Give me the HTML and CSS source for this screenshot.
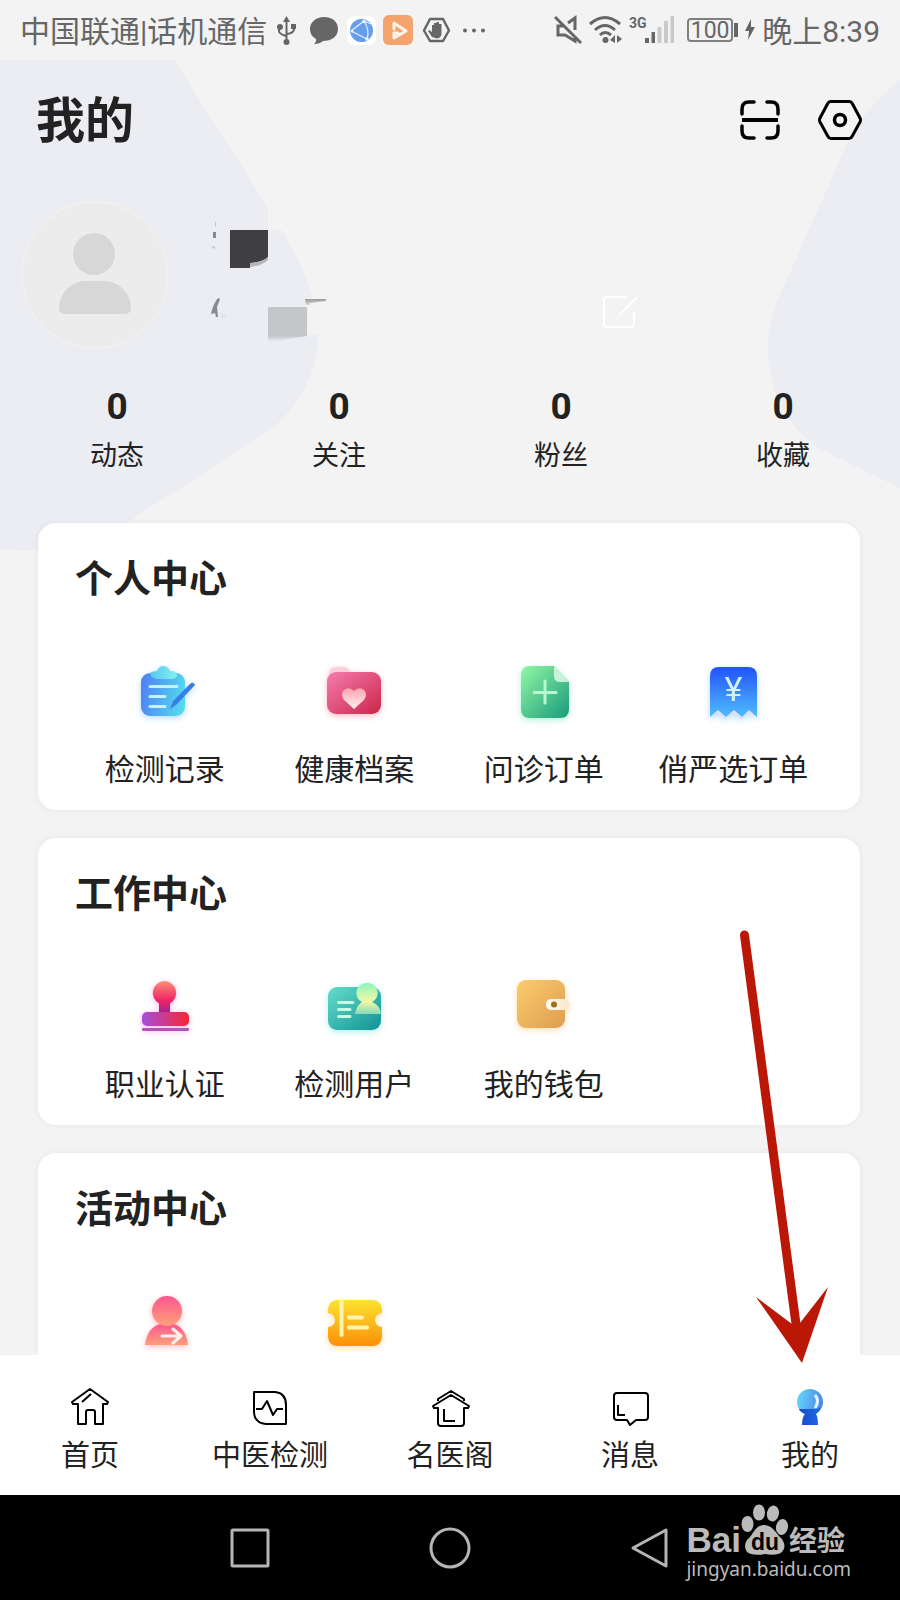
FILE: index.html
```html
<!DOCTYPE html>
<html lang="zh-CN">
<head>
<meta charset="UTF-8" />
<meta name="viewport" content="width=device-width, initial-scale=1" />
<title>我的</title>
<link rel="stylesheet" href="styles.css">
</head>
<body>

<svg class="blob blob-left" viewBox="0 60 330 500"><path d="M0 60H174L262 198C288 240 318 285 318 335C318 385 285 423 255 440L126 523Q70 556 0 549Z"/></svg>
<svg class="blob blob-right" viewBox="760 60 140 440"><path d="M900 80Q860 110 842 155L788 277C776 303 768 320 768 347C768 400 795 436 828 453L900 488Z"/></svg>

<div class="status-bar">
  <span class="carrier">中国联通|话机通信</span>
  <svg class="status-left" width="212" height="32" viewBox="276 14 212 32">
    <g fill="none" stroke="#666" stroke-width="2">
      <path d="M286.500 20V40M279 28V31Q279 34 286 36M294 27V29Q294 33 287 34"/>
    </g>
    <g fill="#666">
      <path d="M286.500 16L290 22H283Z"/>
      <circle cx="286.500" cy="42" r="3"/>
      <circle cx="280" cy="27" r="3"/>
      <path d="M291 24H296V29H291Z"/>
      <path d="M324 17C333 17 338 22 338 29C338 37 331 41 323 41Q320 44 314 44Q317 41 316 39Q310 36 310 29C310 22 316 17 324 17Z"/>
    </g>
    <rect x="347" y="16" width="29" height="29" rx="7" fill="#fff"/>
    <circle cx="361.500" cy="30.500" r="11.500" fill="#659eed"/>
    <path d="M351 31L364 21M351 31L367 39M364 21Q370 30 367 39M364 21L371 24" fill="none" stroke="#e8f2ff" stroke-width="1.200"/>
    <g fill="#e8f2ff"><circle cx="364" cy="21.500" r="1.800"/><circle cx="367" cy="39" r="1.800"/><circle cx="352" cy="31" r="1.500"/></g>
    <rect x="383" y="15" width="30" height="30" rx="6" fill="#f4a36c"/>
    <path d="M394 29V23L406 31L394 38V33H398" fill="none" stroke="#fff3e8" stroke-width="3" stroke-linejoin="round" stroke-linecap="round"/>
    <path d="M430 19H443L449 30.500L443 41H430L424 30.500Z" fill="none" stroke="#666" stroke-width="2.500" stroke-linejoin="round"/>
    <path d="M432 37L428 31Q429 29 432 32V25H434V30V23H436.500V29V22H439V29V24H441.500V34Q441 38 437 38.500Z" fill="#666"/>
    <g fill="#666"><circle cx="465" cy="30.500" r="2"/><circle cx="474" cy="30.500" r="2"/><circle cx="483" cy="30.500" r="2"/></g>
  </svg>
  <div class="status-right">
    <svg width="122" height="32" viewBox="554 14 122 32">
      <g fill="none" stroke="#666" stroke-width="3">
        <path d="M555 17L581 43M565 26H558V35H565L575 41V36M568 23L575 18V30"/>
        <path d="M590 24Q605 11 620 24M595 30Q605 21 615 30M600 35Q605 30 611 35"/>
      </g>
      <circle cx="605.500" cy="40" r="3" fill="#666"/>
      <path d="M610 40L615 35V43ZM617 35V43L622 39Z" fill="#666"/>
      <text x="629" y="28" class="net">3G</text>
      <path d="M645 38H649V43H645ZM651.500 32H655V43H651.500Z" fill="#666"/>
      <path d="M657.500 27H661.500V43H657.500ZM664 21H668V43H664ZM670.500 16H674V43H670.500Z" fill="#c9c9c9"/>
    </svg>
    <span class="battery">100</span>
    <svg class="bolt" width="12" height="24" viewBox="0 0 12 24"><path d="M7 1L1 13H5L4 22L11 9H7Z" fill="#666"/></svg>
    <span class="clock">晚上8:39</span>
  </div>
</div>

<header class="header">
  <h1>我的</h1>
  <div class="header-actions">
    <button aria-label="扫一扫">
      <svg width="44" height="44" viewBox="738 98 44 44" fill="none" stroke="#000" stroke-width="3.500" stroke-linecap="round">
        <path d="M742 114V109Q742 102 749 102H754M767 102H771Q778 102 778 109V114M778 126V131Q778 138 771 138H767M754 138H749Q742 138 742 131V126"/>
        <path d="M742 120H778" stroke-width="4" stroke-linecap="butt"/>
      </svg>
    </button>
    <button aria-label="设置">
      <svg width="44" height="44" viewBox="818 98 44 44" fill="none" stroke="#000" stroke-width="3" stroke-linejoin="round">
        <path d="M831 101.500H849Q851 101.500 852 103L860 118Q861 120 860 122L852 136.500Q851 138.500 849 138.500H831Q829 138.500 828 136.500L820 122Q819 120 820 118L828 103Q829 101.500 831 101.500Z"/>
        <circle cx="840" cy="120" r="5.500" stroke-width="3.500"/>
      </svg>
    </button>
  </div>
</header>

<section class="profile">
  <svg class="avatar" viewBox="0 0 148 148">
    <circle cx="74" cy="74" r="73" fill="#ececec" stroke="#f0f0f0" stroke-width="2"/>
    <circle cx="73" cy="53" r="21" fill="#d7d7d7"/>
    <path d="M64 80H84C100 81 110 94 110 107Q110 113 103 113H45Q38 113 38 107C38 94 48 81 64 80Z" fill="#d7d7d7"/>
  </svg>
  <!-- hidden name and id -->
  <svg class="masked" viewBox="0 0 400 148">
    <defs>
      <linearGradient id="fade" x1="0" y1="0" x2="0" y2="1"><stop offset=".82" stop-color="#c5c6ca"/><stop offset="1" stop-color="#c5c6ca" stop-opacity="0"/></linearGradient>
      <linearGradient id="fadeLine" x1="0" y1="0" x2="0" y2="1"><stop stop-color="#999"/><stop offset="1" stop-color="#ddd"/></linearGradient>
    </defs>
    <path d="M68 0H92V29H68ZM107 97H121V134H107Z" fill="#f3f3f3"/>
    <path d="M30 29H68V56Q63 61 50 62V67H30Z" fill="#3f3f42"/>
    <path d="M50 62Q63 61 68 56V59Q62 65 50 66Z" fill="#b5b5b9"/>
    <path d="M13 31H16V37H13Z" fill="#88898c"/>
    <path d="M15 21H16V26H15ZM11 46L15 45V48Z" fill="#c5c6ca"/>
    <path d="M18 97L20 98L17 106L18 116H16L15 112L11 113Q13 103 18 97Z" fill="#88898c"/>
    <path d="M21 112L27 114V117H21Z" fill="#e3e4e9"/>
    <path d="M68 106H107V135L68 141Z" fill="url(#fade)"/>
    <path d="M105 98H126V100L110 102V104H106Z" fill="url(#fadeLine)"/>
  </svg>
  <button class="edit" aria-label="编辑">
    <svg width="40" height="40" viewBox="600 292 40 40" fill="none" stroke="#fff" stroke-width="2"><path d="M627 297H608Q604 297 604 301V323Q604 327 608 327H630Q634 327 634 323V312M619 315L637 297"/></svg>
  </button>
</section>

<section class="stats">
  <div><strong>0</strong><span>动态</span></div>
  <div><strong>0</strong><span>关注</span></div>
  <div><strong>0</strong><span>粉丝</span></div>
  <div><strong>0</strong><span>收藏</span></div>
</section>

<main class="cards">
  <section class="card">
    <h2>个人中心</h2>
    <div class="menu">
      <a href="#">
        <svg class="glow-blue" viewBox="0 0 60 60">
          <defs>
            <linearGradient id="g1" x1="0" y1=".4" x2="1" y2=".6"><stop stop-color="#4d83f3"/><stop offset="1" stop-color="#55dbee"/></linearGradient>
            <linearGradient id="g2"><stop stop-color="#5ac6ee"/><stop offset="1" stop-color="#82f0ee"/></linearGradient>
          </defs>
          <rect x="6" y="10" width="44" height="43" rx="9" fill="url(#g1)"/>
          <path d="M15 10Q17 8 22 8Q24 3 28 3Q33 3 35 8H38Q42 9 42 13Q41 16 36 16H22Q15 15 15 10Z" fill="url(#g2)"/>
          <path d="M15 23.500H42M15 33.500H30M15 43.500H30" stroke="#c3f2fb" stroke-width="3" stroke-linecap="round"/>
          <path d="M56 20Q59 19 60 22L42 41L35 46L38 38Z" fill="#387ee8"/>
        </svg>
        <span>检测记录</span>
      </a>
      <a href="#">
        <svg class="glow-red" viewBox="0 0 60 60">
          <defs>
            <linearGradient id="g3" x1="0" y1="0" x2="1" y2="1"><stop stop-color="#f57caf"/><stop offset="1" stop-color="#cc2549"/></linearGradient>
            <linearGradient id="g4" x1="0" y1="0" x2="0" y2="1"><stop stop-color="#fba5b0"/><stop offset="1" stop-color="#fff0f0"/></linearGradient>
          </defs>
          <path d="M5 12Q5 4 12 4H20Q25 4 26 11Z" fill="#fbd0d9"/>
          <rect x="3" y="9" width="54" height="42" rx="9" fill="url(#g3)"/>
          <path d="M30 46L20 37Q16 31 20 27Q25 23 30 28Q35 23 40 27Q44 31 40 37Z" fill="url(#g4)"/>
        </svg>
        <span>健康档案</span>
      </a>
      <a href="#">
        <svg class="glow-green" viewBox="0 0 60 60">
          <defs><linearGradient id="g5" x1="0" y1="0" x2="1" y2="1"><stop stop-color="#92f7a4"/><stop offset="1" stop-color="#199b7c"/></linearGradient></defs>
          <path d="M16 3H40L55 19V46Q55 55 46 55H16Q7 55 7 46V12Q7 3 16 3Z" fill="url(#g5)"/>
          <path d="M40 3L55 19H46Q40 19 40 13Z" fill="#c9f3d9"/>
          <path d="M20 29.500H42M31 18V40" stroke="#b9f7d1" stroke-width="3" stroke-linecap="round"/>
        </svg>
        <span>问诊订单</span>
      </a>
      <a href="#">
        <svg class="glow-blue" viewBox="0 0 60 60">
          <defs><linearGradient id="g6" x1="0" y1="0" x2="0" y2="1"><stop stop-color="#2253fb"/><stop offset="1" stop-color="#4fbcfc"/></linearGradient></defs>
          <path d="M8 48H54V54L46 50L38 55L30 50L22 55L15 50L8 54Z" fill="#dfe4fb"/>
          <path d="M16 4H45Q54 4 54 13V54L46 47L39 54L31 47L23 54L15 47L7 54V13Q7 4 16 4Z" fill="url(#g6)"/>
          <text x="30.500" y="38" class="yen">¥</text>
        </svg>
        <span>俏严选订单</span>
      </a>
    </div>
  </section>

  <section class="card">
    <h2>工作中心</h2>
    <div class="menu">
      <a href="#">
        <svg class="glow-pink" viewBox="0 0 60 60">
          <defs>
            <linearGradient id="g7" x1="0" y1="0" x2="0" y2="1"><stop stop-color="#fb9070"/><stop offset=".6" stop-color="#ef2468"/><stop offset="1" stop-color="#a1208c"/></linearGradient>
            <linearGradient id="g8"><stop stop-color="#a54fdd"/><stop offset="1" stop-color="#f72631"/></linearGradient>
          </defs>
          <path d="M29.500 3A12 12 0 0 1 35 25.500V35H24V25.500A12 12 0 0 1 29.500 3Z" fill="url(#g7)"/>
          <rect x="7" y="34" width="47" height="14" rx="5" fill="url(#g8)"/>
          <rect x="7" y="50" width="47" height="3" rx="1" fill="#b155bd"/>
        </svg>
        <span>职业认证</span>
      </a>
      <a href="#">
        <svg class="glow-teal" viewBox="0 0 60 60">
          <defs>
            <linearGradient id="g9" x1="0" y1="0" x2="1" y2="1"><stop stop-color="#65ddca"/><stop offset="1" stop-color="#109295"/></linearGradient>
            <linearGradient id="g10" x1="0" y1="0" x2="0" y2="1"><stop stop-color="#8bf6bc"/><stop offset=".6" stop-color="#f2f8a5"/><stop offset="1" stop-color="#86d9bc"/></linearGradient>
          </defs>
          <rect x="4" y="9" width="53" height="43" rx="9" fill="url(#g9)"/>
          <path d="M14.500 24.500H29M14.500 31.500H26M14.500 38.500H26" stroke="#c8fbe2" stroke-width="3" stroke-linecap="round"/>
          <path d="M43 5A10 10 0 0 1 48 24Q56 27 57 36H31Q32 28 38 24A10 10 0 0 1 43 5Z" fill="url(#g10)"/>
        </svg>
        <span>检测用户</span>
      </a>
      <a href="#">
        <svg class="glow-gold" viewBox="0 0 60 60">
          <defs>
            <linearGradient id="g11" x1="0" y1="0" x2="1" y2="1"><stop stop-color="#fccc6b"/><stop offset="1" stop-color="#dd9d52"/></linearGradient>
            <linearGradient id="g12"><stop stop-color="#fff9ef"/><stop offset="1" stop-color="#fbe7cc"/></linearGradient>
          </defs>
          <rect x="3" y="2" width="48" height="48" rx="9" fill="url(#g11)"/>
          <rect x="32" y="21" width="23" height="11" rx="5" fill="url(#g12)"/>
          <circle cx="40" cy="26.500" r="3" fill="#9b7419"/>
        </svg>
        <span>我的钱包</span>
      </a>
    </div>
  </section>

  <section class="card card-last">
    <h2>活动中心</h2>
    <div class="menu">
      <a href="#" aria-label="邀请">
        <svg class="glow-red" viewBox="0 0 60 60">
          <defs><linearGradient id="g13" x1="0" y1="0" x2="0" y2="1"><stop stop-color="#fb5790"/><stop offset="1" stop-color="#fda078"/></linearGradient></defs>
          <path d="M10 52Q12 35 25 31H39Q51 35 53 52Z" fill="url(#g13)"/>
          <circle cx="32" cy="18" r="15" fill="url(#g13)"/>
          <path d="M27 43H45M38 36L46 43L38 50" fill="none" stroke="#fff0ea" stroke-width="3" stroke-linecap="round" stroke-linejoin="round"/>
        </svg>
      </a>
      <a href="#" aria-label="卡券">
        <svg class="glow-gold" viewBox="0 0 60 60">
          <defs><linearGradient id="g14" x1="0" y1="0" x2="0" y2="1"><stop stop-color="#fde331"/><stop offset="1" stop-color="#fd8f07"/></linearGradient></defs>
          <path d="M14 7H48Q57 7 58 16V20A7 7 0 0 0 58 34V44Q57 53 48 53H14Q5 53 4 44V34A7 7 0 0 0 4 20V16Q5 7 14 7Z" fill="url(#g14)"/>
          <path d="M17.500 8V42M25 24.500H38M25 34.500H43" stroke="#fff3b0" stroke-width="4" stroke-linecap="round"/>
        </svg>
      </a>
    </div>
  </section>
</main>

<nav class="tabs">
  <a href="#">
    <svg viewBox="0 0 40 40"><path d="M20 2L38 15L37 17H33V37H25V25Q25 23 23 23H18Q16 23 16 25V37H8V17H3L2 15ZM12 15L21 7"/></svg>
    <span>首页</span>
  </a>
  <a href="#">
    <svg viewBox="0 0 40 40"><path d="M4 5H25Q36 6 36 18V37H16Q4 36 4 24ZM6 22H12L17 14L23 28L27 22H33"/></svg>
    <span>中医检测</span>
  </a>
  <a href="#">
    <svg viewBox="0 0 40 40"><path d="M21 8L39 19L38 21H34V36Q34 39 31 39H11Q8 39 8 36V21H4L3 19ZM8 14V12L21 4L34 12V14M14 22V34H25"/></svg>
    <span>名医阁</span>
  </a>
  <a href="#">
    <svg viewBox="0 0 40 40"><path d="M7 6H35Q38 6 38 9V30Q38 33 35 33H26L20 38L17 33H7Q4 33 4 30V9Q4 6 7 6ZM8 18V28H15"/></svg>
    <span>消息</span>
  </a>
  <a href="#" class="active">
    <svg viewBox="0 0 40 40">
      <defs>
        <linearGradient id="g15" x1="0" y1=".4" x2="1" y2=".6"><stop stop-color="#64d4fc"/><stop offset="1" stop-color="#4a86e0"/></linearGradient>
        <linearGradient id="g16"><stop stop-color="#1d49c8"/><stop offset="1" stop-color="#1c6be8"/></linearGradient>
      </defs>
      <circle cx="20" cy="15" r="13" fill="url(#g15)"/>
      <path d="M9 22H22Q28 22 31 20Q30 24 26 27Q28 30 28 38H12Q12 30 15 27Q10 25 9 22Z" fill="url(#g16)"/>
      <path d="M25 8Q30 14 25 21" fill="none" stroke="#dff5ff" stroke-width="3"/>
    </svg>
    <span>我的</span>
  </a>
</nav>

<div class="system-nav">
  <button aria-label="最近"><svg viewBox="0 0 44 44"><rect x="4" y="4" width="36" height="36" rx="1"/></svg></button>
  <button aria-label="主屏幕"><svg viewBox="0 0 44 44"><circle cx="22" cy="22" r="19"/></svg></button>
  <button aria-label="返回"><svg viewBox="0 0 44 44"><path d="M38 4V40L5 22Z"/></svg></button>
  <div class="watermark">
    <div class="brand">
      <span class="bai">Bai</span>
      <svg width="48" height="54" viewBox="745 1503 48 54" fill="#bbb">
        <ellipse cx="751.500" cy="1524" rx="6" ry="8"/>
        <ellipse cx="763" cy="1512.500" rx="6" ry="8"/>
        <ellipse cx="777" cy="1513.500" rx="6" ry="8" transform="rotate(12 777 1513)"/>
        <ellipse cx="786" cy="1527" rx="6" ry="8" transform="rotate(10 786 1527)"/>
        <path d="M768 1525C777 1525 780 1534 786 1539Q791 1547 786 1552Q781 1556 769 1554Q756 1556 751 1552Q747 1546 751 1540C758 1534 759 1525 768 1525Z"/>
        <text x="769" y="1550" class="du">du</text>
      </svg>
      <span class="jy">经验</span>
    </div>
    <div class="url">jingyan.baidu.com</div>
  </div>
</div>

<!-- pointer to the last tab -->
<svg class="arrow" viewBox="738 928 94 438">
  <path d="M744.500 935L796.500 1328" stroke="#ba1706" stroke-width="9" stroke-linecap="round"/>
  <path d="M802 1363L756 1297L792 1324L800 1323L828 1287Z" fill="#ba1706"/>
</svg>

</body>
</html>
```
FILE: styles.css
```css
* {
  box-sizing: border-box;
}

body {
  position: relative;
  display: flex;
  flex-direction: column;
  height: 100vh;
  margin: 0;
  overflow: hidden;
  background: #f3f3f3;
  color: #222;
  font-family: Roboto, "Noto Sans CJK SC", sans-serif;
}

h1, h2 {
  margin: 0;
}

a {
  color: inherit;
  text-decoration: none;
}

button {
  padding: 0;
  border: none;
  background: none;
  cursor: pointer;
}

svg {
  display: block;
  flex-shrink: 0;
}

.blob {
  position: absolute;
  top: 60px;
  z-index: -1;
  fill: #ecedf3;
}

.blob-left {
  left: 0;
  width: 330px;
}

.blob-right {
  right: 0;
  width: 140px;
}

/* status bar */
.status-bar {
  display: flex;
  align-items: center;
  flex-shrink: 0;
  height: 60px;
  padding: 0 20px;
  color: #666;
  font-size: 30px;
  line-height: 56px;
  white-space: nowrap;
}

.carrier,
.clock {
  padding-top: 4px;
}

.status-left {
  margin-left: 9px;
}

.status-right {
  display: flex;
  align-items: center;
  margin-left: auto;
}

.net {
  font: bold 14px Roboto, sans-serif;
  fill: #666;
}

.battery {
  position: relative;
  width: 46px;
  height: 24px;
  margin: 0 11px;
  border: 2px solid #808080;
  border-radius: 4px;
  font-size: 23px;
  line-height: 21px;
  text-align: center;
}

.battery::after {
  content: '';
  position: absolute;
  top: 3px;
  right: -7px;
  width: 4px;
  height: 14px;
  background: #666;
}

.bolt {
  margin-right: 6px;
}

/* header */
.header {
  display: flex;
  align-items: center;
  justify-content: space-between;
  flex-shrink: 0;
  height: 120px;
  padding: 0 38px 0 36px;
}

.header h1 {
  padding-top: 4px;
  font-size: 49px;
  line-height: 72px;
}

.header-actions {
  display: flex;
  gap: 36px;
}

.profile {
  display: flex;
  flex-shrink: 0;
  margin-top: 21px;
  padding-left: 21px;
}

.avatar {
  width: 148px;
  margin-right: 31px;
}

.masked {
  width: 400px;
}

.edit {
  align-self: flex-end;
  margin-bottom: 17px;
}

.stats {
  display: grid;
  grid-template-columns: repeat(4, 1fr);
  margin: 36px 6px 49px;
  text-align: center;
}

.stats div {
  display: flex;
  flex-direction: column;
  gap: 9px;
}

.stats strong {
  font-size: 37px;
  line-height: 44px;
}

.stats span {
  font-size: 27px;
  line-height: 36px;
}

/* cards */
.cards {
  display: flex;
  flex: 1;
  flex-direction: column;
  gap: 28px;
  min-height: 0;
  padding: 0 40px 0 38px;
}

.card {
  flex-shrink: 0;
  padding: 28px 32px 20px;
  border-radius: 18px;
  background: #fff;
  box-shadow: 0 0 6px rgba(0, 0, 0, 0.06);
}

.card-last {
  flex: 1 1 0;
  padding-bottom: 0;
  border-radius: 18px 18px 0 0;
}

.card h2 {
  padding-left: 5px;
  font-size: 38px;
  line-height: 56px;
}

.menu {
  display: grid;
  grid-template-columns: repeat(4, 1fr);
  margin-top: 56px;
}

.menu a {
  display: flex;
  flex-direction: column;
  align-items: center;
  gap: 27px;
  font-size: 30px;
  line-height: 40px;
  white-space: nowrap;
}

.menu svg {
  width: 60px;
  height: 60px;
  overflow: visible;
}

.yen {
  font: 34px Roboto, sans-serif;
  fill: #d3f0ff;
  text-anchor: middle;
}

.glow-blue { filter: drop-shadow(0 2px 3px #4da6ff66); }
.glow-red { filter: drop-shadow(0 2px 3px #ff5a6e66); }
.glow-green { filter: drop-shadow(0 2px 3px #3fd99666); }
.glow-pink { filter: drop-shadow(0 1px 3px #f04fc066); }
.glow-teal { filter: drop-shadow(0 2px 3px #3fd9cc66); }
.glow-gold { filter: drop-shadow(0 2px 3px #ffb04066); }

/* bottom tabs */
.tabs {
  z-index: 1;
  display: grid;
  grid-template-columns: repeat(5, 1fr);
  flex-shrink: 0;
  height: 140px;
  padding-top: 32px;
  background: #fff;
}

.tabs a {
  display: flex;
  flex-direction: column;
  align-items: center;
  gap: 9px;
  font-size: 29px;
  line-height: 40px;
  white-space: nowrap;
}

.tabs svg {
  width: 40px;
  height: 40px;
  overflow: visible;
  fill: none;
  stroke: #000;
  stroke-width: 2;
  stroke-linejoin: round;
}

.tabs .active svg {
  stroke: none;
}

.system-nav {
  position: relative;
  display: flex;
  align-items: center;
  justify-content: center;
  gap: 156px;
  flex-shrink: 0;
  height: 105px;
  background: #000;
}

.system-nav button svg {
  width: 44px;
  height: 44px;
  fill: none;
  stroke: #b5b5b5;
  stroke-width: 3;
  stroke-linejoin: round;
}

.watermark {
  position: absolute;
  top: 8px;
  right: 49px;
  color: #bbb;
}

.brand {
  display: flex;
  align-items: flex-end;
  height: 54px;
}

.bai {
  font: bold 35px/34px "Liberation Sans", sans-serif;
}

.jy {
  font-size: 28px;
  font-weight: bold;
  line-height: 30px;
}

.du {
  font: bold 23px "Liberation Sans", sans-serif;
  fill: #000;
  text-anchor: middle;
}

.url {
  font: 19px/24px "Noto Sans", sans-serif;
}

.arrow {
  position: absolute;
  right: 68px;
  bottom: 234px;
  z-index: 2;
  width: 94px;
}
```
